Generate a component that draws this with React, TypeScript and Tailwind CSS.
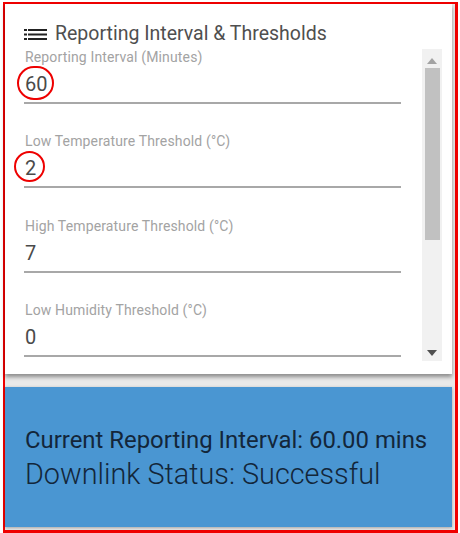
const FIELDS = [
  { label: "Reporting Interval (Minutes)", value: "60", ring: "left-[-7px] top-[-5px] w-[37px] h-[34px]" },
  { label: "Low Temperature Threshold (°C)", value: "2", ring: "left-[-10px] top-[-4px] w-[31px] h-[31px]" },
  { label: "High Temperature Threshold (°C)", value: "7", ring: "" },
  { label: "Low Humidity Threshold (°C)", value: "0", ring: "" },
];

function Field({ label, value, ring }: { label: string; value: string; ring: string }) {
  return (
    <div className="h-[84.3px] shrink-0">
      <div className="pl-[1px] text-[14px] leading-[16px] text-[#a3a3a3] tracking-[0.14px] whitespace-nowrap">{label}</div>
      <div className="relative mt-[6px] h-[27px] pl-[1px]">
        <span className="text-[20px] leading-[27px] text-[#4a4a4a]">{value}</span>
        {ring && <span className={`absolute rounded-full border-2 border-[#ee0000] ${ring}`} />}
      </div>
      <div className="mt-[4px] h-[2px] bg-[#a8a8a8]" />
    </div>
  );
}

export default function App() {
  return (
    <div className="w-[460px] h-[533px] bg-white pt-[2px] pl-[3px] font-['Roboto',sans-serif]">
      <div className="w-[455px] h-[531px] border-2 border-r-[3px] border-b-[3px] border-[#f00000] bg-[#e9e9e9] flex flex-col">
        <div className="w-[447px] h-[370px] bg-white shadow-[0_3px_4px_rgba(0,0,0,0.4)] pl-[9px] flex flex-col">
          <div className="h-[44px] pt-[15px] pl-[10px] flex items-center gap-[8px]">
            <svg width="23" height="12" viewBox="0 0 23 12" className="shrink-0 mt-[2px]">
              <path fill="#222222" d="M0 0h3v2H0zm0 4.5h3v2H0zM0 9h3v2H0zM4 0h19v2H4zm0 4.5h19v2H4zM4 9h19v2H4z" />
            </svg>
            <span className="text-[19.5px] leading-[24px] text-[#4f4f4f] whitespace-nowrap">
              Reporting Interval &amp; Thresholds
            </span>
          </div>
          <div className="flex mt-[1px]">
            <div className="w-[387px] h-[312px] overflow-hidden pl-[10px]">
              {FIELDS.map((f) => (
                <Field key={f.label} {...f} />
              ))}
            </div>
            <div className="ml-[21px] w-[20px] h-[312px] bg-[#f1f1f1] flex flex-col items-center">
              <svg width="10" height="6" viewBox="0 0 10 6" className="mt-[9px] shrink-0">
                <path fill="#a3a3a3" d="M5 0l5 6H0z" />
              </svg>
              <div className="mt-[4px] w-[15px] h-[172px] bg-[#c1c1c1]" />
              <div className="flex-1" />
              <svg width="10" height="6" viewBox="0 0 10 6" className="mb-[5px] shrink-0">
                <path fill="#505050" d="M0 0h10L5 6z" />
              </svg>
            </div>
          </div>
        </div>
        <div className="mt-[13px] w-[447px] h-[140px] bg-[#4a96d2] shadow-[0_1px_3px_rgba(0,0,0,0.3)] pl-[20px] pt-[39px] text-[#13263a]">
          <div className="text-[23.9px] leading-[28px] whitespace-nowrap">Current Reporting Interval: 60.00 mins</div>
          <div className="mt-[3px] text-[28.8px] leading-[34px] font-light whitespace-nowrap">Downlink Status: Successful</div>
        </div>
      </div>
    </div>
  );
}
